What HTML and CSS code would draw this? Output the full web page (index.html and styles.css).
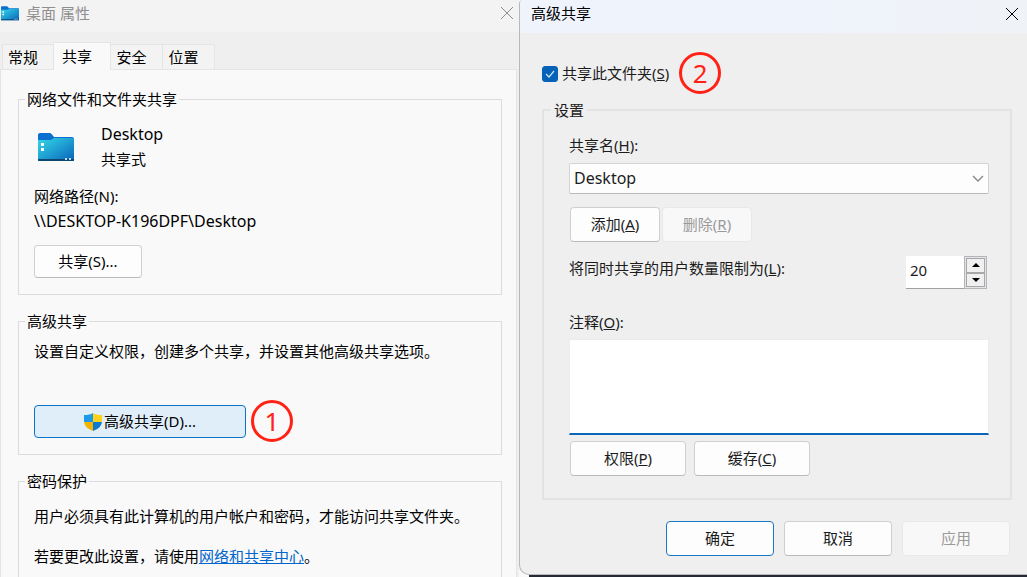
FILE: index.html
```html
<!DOCTYPE html>
<html lang="zh-CN">

<head>
    <meta charset="UTF-8" />
    <meta name="viewport" content="width=device-width, initial-scale=1.0">
    <title>桌面 属性</title>
    <link rel="stylesheet" href="styles.css">
</head>

<body>
    <div class="desktop">
        <section class="window">
            <header class="titlebar">
                <svg class="title-icon" width="18" height="15" viewBox="0 0 36 29">
                    <use href="#folder" />
                </svg>
                <h1>桌面 属性</h1>
                <button type="button" class="close" aria-label="关闭">
                    <svg width="12" height="12" viewBox="0 0 12 12"><path d="M0 0L12 12M12 0L0 12" /></svg>
                </button>
            </header>

            <nav class="tabs">
                <button type="button">常规</button>
                <button type="button" class="active">共享</button>
                <button type="button">安全</button>
                <button type="button">位置</button>
            </nav>

            <div class="page">
                <fieldset>
                    <legend>网络文件和文件夹共享</legend>
                    <div class="folder">
                        <svg width="36" height="29" viewBox="0 0 36 29">
                            <defs>
                                <linearGradient id="front" x1="0" y1="0" x2="1" y2="1">
                                    <stop offset="0" stop-color="#35d6e6" />
                                    <stop offset="0.5" stop-color="#1f9fd2" />
                                    <stop offset="1" stop-color="#0a62b8" />
                                </linearGradient>
                                <g id="folder">
                                    <path fill="#0a6fcf" d="M0 2Q0 0 2 0H12Q13 0 16 4H34Q36 4 36 6V12H0Z" />
                                    <path fill="url(#front)" d="M0 7H12Q14 7 16 5H36V27Q36 28 35 28H1Q0 28 0 27Z" />
                                    <path fill="#0b4770" d="M0 26H36V27Q36 28 35 28H1Q0 28 0 27Z" />
                                    <path fill="#fff" d="M3 10H6V13H3ZM3 15H6V18H3Z" />
                                    <path fill="#b8dcf0" d="M27 25H29V27H27ZM31 25H33V27H31Z" />
                                </g>
                            </defs>
                            <use href="#folder" />
                        </svg>
                        <div>
                            <p class="share-path">Desktop</p>
                            <p>共享式</p>
                        </div>
                    </div>
                    <div class="path">
                        <p>网络路径(N):</p>
                        <p class="share-path">\\DESKTOP-K196DPF\Desktop</p>
                    </div>
                    <button type="button" class="btn share">共享(S)...</button>
                </fieldset>

                <fieldset>
                    <legend>高级共享</legend>
                    <p class="hint">设置自定义权限，创建多个共享，并设置其他高级共享选项。</p>
                    <div class="marked">
                        <button type="button" class="btn advanced">
                            <svg width="18" height="18" viewBox="0 0 18 18">
                                <clipPath id="shield">
                                    <path d="M9 0Q12 2 18 2V8Q18 15 9 18Q0 15 0 8V2Q6 2 9 0Z" />
                                </clipPath>
                                <g clip-path="url(#shield)">
                                    <path fill="#1e9be8" d="M0 0H9V9H0Z" />
                                    <path fill="#ffd21a" d="M9 0H18V9H9Z" />
                                    <path fill="#f5b400" d="M0 9H9V18H0Z" />
                                    <path fill="#0c7ad0" d="M9 9H18V18H9Z" />
                                </g>
                            </svg>
                            高级共享(D)...
                        </button>
                        <span class="step">1</span>
                    </div>
                </fieldset>

                <fieldset>
                    <legend>密码保护</legend>
                    <p class="password">用户必须具有此计算机的用户帐户和密码，才能访问共享文件夹。</p>
                    <p class="change">若要更改此设置，请使用<a href="#">网络和共享中心</a>。</p>
                </fieldset>
            </div>
        </section>

        <div class="front">
            <form class="dialog">
                <header class="titlebar">
                    <h2>高级共享</h2>
                    <button type="button" class="close" aria-label="关闭">
                        <svg width="12" height="12" viewBox="0 0 12 12"><path d="M0 0L12 12M12 0L0 12" /></svg>
                    </button>
                </header>

                <div class="dialog-body">
                    <div class="marked">
                        <label class="check"><input type="checkbox" checked><span>共享此文件夹(<u>S</u>)</span></label>
                        <span class="step">2</span>
                    </div>

                    <fieldset>
                        <legend>设置</legend>
                        <label for="shareName">共享名(<u>H</u>):</label>
                        <select id="shareName">
                            <option>Desktop</option>
                        </select>
                        <div class="name-actions">
                            <button type="button" class="btn">添加(<u>A</u>)</button>
                            <button type="button" class="btn" disabled>删除(<u>R</u>)</button>
                        </div>
                        <div class="limit">
                            <label for="userLimit">将同时共享的用户数量限制为(<u>L</u>):</label>
                            <div class="spinner">
                                <input id="userLimit" type="text" value="20">
                                <div class="arrows">
                                    <button type="button" aria-label="增加">
                                        <svg width="8" height="4" viewBox="0 0 8 4"><path d="M4 0L8 4H0Z" /></svg>
                                    </button>
                                    <button type="button" aria-label="减少">
                                        <svg width="8" height="4" viewBox="0 0 8 4"><path d="M0 0H8L4 4Z" /></svg>
                                    </button>
                                </div>
                            </div>
                        </div>
                        <label for="comment">注释(<u>O</u>):</label>
                        <textarea id="comment"></textarea>
                        <div class="share-actions">
                            <button type="button" class="btn">权限(<u>P</u>)</button>
                            <button type="button" class="btn">缓存(<u>C</u>)</button>
                        </div>
                    </fieldset>

                    <footer>
                        <button type="button" class="btn primary">确定</button>
                        <button type="button" class="btn">取消</button>
                        <button type="button" class="btn" disabled>应用</button>
                    </footer>
                </div>
            </form>
        </div>
    </div>
</body>

</html>
```
FILE: styles.css
```css
* {
    box-sizing: border-box;
}

body {
    margin: 0;
    background-color: #f9f9f9;
    color: #000;
    font-family: "Noto Sans", "Noto Sans CJK SC", sans-serif;
    font-size: 15px;
    line-height: 25px;
}

button, input, select, textarea {
    margin: 0;
    padding: 0;
    color: inherit;
    font: inherit;
}

p, h1, h2 {
    margin: 0;
    font-size: 15px;
    font-weight: normal;
}

.desktop {
    display: grid;
    grid-template-rows: 100%;
    grid-template-columns: 519fr 508fr;
    height: 100vh;
    overflow: hidden;
}

.titlebar {
    display: flex;
    align-items: center;
    height: 32px;
}

.titlebar h1, .titlebar h2 {
    flex: 1;
}

.close {
    display: flex;
    border: none;
    background: none;
}

.close path {
    fill: none;
    stroke: currentColor;
}

.btn {
    height: 35px;
    border: 1px solid #d0d0d0;
    border-bottom-color: #bababa;
    border-radius: 4px;
    background-color: #fdfdfd;
}

.btn:disabled {
    border-color: #e8e8e8;
    background-color: #f8f8f8;
    color: #9a9a9a;
}

/* numbered marks over the controls */
.marked {
    position: relative;
    width: fit-content;
}

.step {
    position: absolute;
    top: 50%;
    left: 100%;
    width: 42px;
    height: 42px;
    margin: -22px 0 0 5px;
    border: 3px solid #ff2215;
    border-radius: 50%;
    color: #ff2215;
    font-size: 26px;
    line-height: 36px;
    text-align: center;
}

/* properties window */
.window {
    overflow: hidden;
    background-color: #efefef;
}

.window .titlebar {
    padding: 0 6px 6px 1px;
    background-color: #f3f3f3;
    color: #8f8f8f;
}

.title-icon {
    margin-right: 7px;
}

.tabs {
    display: flex;
    align-items: flex-end;
    height: 37px;
    padding-left: 2px;
}

.tabs button {
    width: 52px;
    height: 25px;
    padding-right: 10px;
    border: 1px solid #e5e5e5;
    border-bottom: none;
    background-color: #f3f3f3;
}

.tabs button + button {
    border-left: none;
}

.tabs .active {
    width: 57px;
    height: 28px;
    margin-bottom: -1px;
    background-color: #f9f9f9;
}

.page {
    height: 100%;
    margin-right: 2px;
    padding: 19px 14px 0 17px;
    border: 1px solid #e5e5e5;
    background-color: #f9f9f9;
}

.page fieldset {
    min-width: 0;
    margin: 0 0 16px;
    padding: 0 15px 16px;
    border: 1px solid #dcdcdc;
}

.page legend {
    margin-left: -9px;
    padding: 0 2px;
    line-height: 20px;
}

.page p {
    white-space: nowrap;
}

.folder {
    display: flex;
    align-items: center;
    gap: 27px;
    padding: 13px 0 0 4px;
}

.path {
    margin-top: 12px;
}

.share-path, .dialog select {
    font-size: 16px;
}

.page .btn {
    height: 33px;
}

.share {
    width: 108px;
    margin-top: 11px;
}

.hint {
    margin: 8px 0 41px;
}

.page .advanced {
    display: flex;
    align-items: center;
    justify-content: center;
    gap: 2px;
    width: 212px;
    border-color: #0a74c8;
    background-color: #e0eef9;
}

.password {
    margin: 13px 0 15px;
}

.page a {
    color: #0066cc;
}

/* advanced sharing dialog */
.front {
    display: flex;
    padding-bottom: 2px;
    background: linear-gradient(#262a35, #262a35) 10px 100% / 100% 2px no-repeat;
}

.dialog {
    flex: 1;
    border: 1px solid #b8b8b8;
    border-width: 0 0 1px 1px;
    border-radius: 4px 0 0 10px;
    background-color: #efefef;
    color: #1c1c1c;
    overflow: hidden;
}

.dialog .titlebar {
    height: 33px;
    padding: 0 9px 6px 11px;
    background: linear-gradient(90deg, #eff3fb 60%, #eff2f6);
    color: #000;
}

.dialog-body {
    padding: 28px 15px 0 22px;
}

.check {
    display: flex;
    align-items: center;
    gap: 4px;
    padding-right: 5px;
}

.check input {
    width: 16px;
    height: 16px;
    border: 1px solid #8a8a8a;
    border-radius: 3px;
    appearance: none;
    background-color: #fdfdfd;
}

.check input:checked {
    border-color: #0562b8;
    background: #0562b8 url("data:image/svg+xml,%3Csvg xmlns='http://www.w3.org/2000/svg' width='10' height='8'%3E%3Cpath d='M1 4L4 7L9 1' fill='none' stroke='%23cfe4f7' stroke-width='1.2'/%3E%3C/svg%3E") no-repeat center;
}

.dialog fieldset {
    min-width: 0;
    margin: 14px 0 0;
    padding: 0 21px 22px 25px;
    border: 2px solid #e3e3e3;
}

.dialog legend {
    margin-left: -18px;
    padding: 0 3px;
    line-height: 20px;
}

.dialog fieldset label {
    display: block;
}

.dialog legend + label {
    margin-top: 13px;
}

.dialog select {
    display: block;
    width: 100%;
    height: 31px;
    margin-top: 5px;
    padding: 0 4px;
    border: 1px solid #d4d4d4;
    border-bottom-color: #bababa;
    border-radius: 2px;
    appearance: none;
    background: #fdfdfd url("data:image/svg+xml,%3Csvg xmlns='http://www.w3.org/2000/svg' width='12' height='7'%3E%3Cpath d='M1 1L6 6L11 1' fill='none' stroke='%23888' stroke-width='1.4'/%3E%3C/svg%3E") no-repeat right 4px center;
}

.name-actions, .share-actions {
    display: flex;
    gap: 2px;
    margin-top: 13px;
    padding-left: 1px;
}

.name-actions .btn {
    width: 90px;
}

.limit {
    display: flex;
    justify-content: space-between;
    margin: 14px 2px 21px 0;
}

.spinner {
    display: flex;
    width: 81px;
    height: 33px;
}

.spinner input {
    width: 58px;
    padding: 0 4px 4px;
    border: none;
    border-bottom: 1px solid #a0a0a0;
    background-color: #fff;
}

.arrows {
    display: flex;
    flex: 1;
    flex-direction: column;
    padding: 1px;
    border: 1px solid #b4b4ba;
    background-color: #e4e4e8;
}

.arrows button {
    display: flex;
    flex: 1;
    align-items: center;
    justify-content: center;
    border: 1px solid #a8a8a8;
    background-color: #f0f0f0;
}

.dialog textarea {
    display: block;
    width: 100%;
    height: 96px;
    margin-top: 4px;
    border: 1px solid #ececec;
    border-bottom: 2px solid #0a67b8;
    background-color: #fff;
    outline: none;
    resize: none;
}

.share-actions {
    gap: 8px;
    margin-top: 6px;
}

.share-actions .btn {
    width: 116px;
}

.dialog footer {
    display: flex;
    justify-content: flex-end;
    gap: 10px;
    margin: 21px 2px 0 0;
}

.dialog footer .btn {
    width: 108px;
}

.dialog .primary {
    border-color: #1a78c8;
}
```
